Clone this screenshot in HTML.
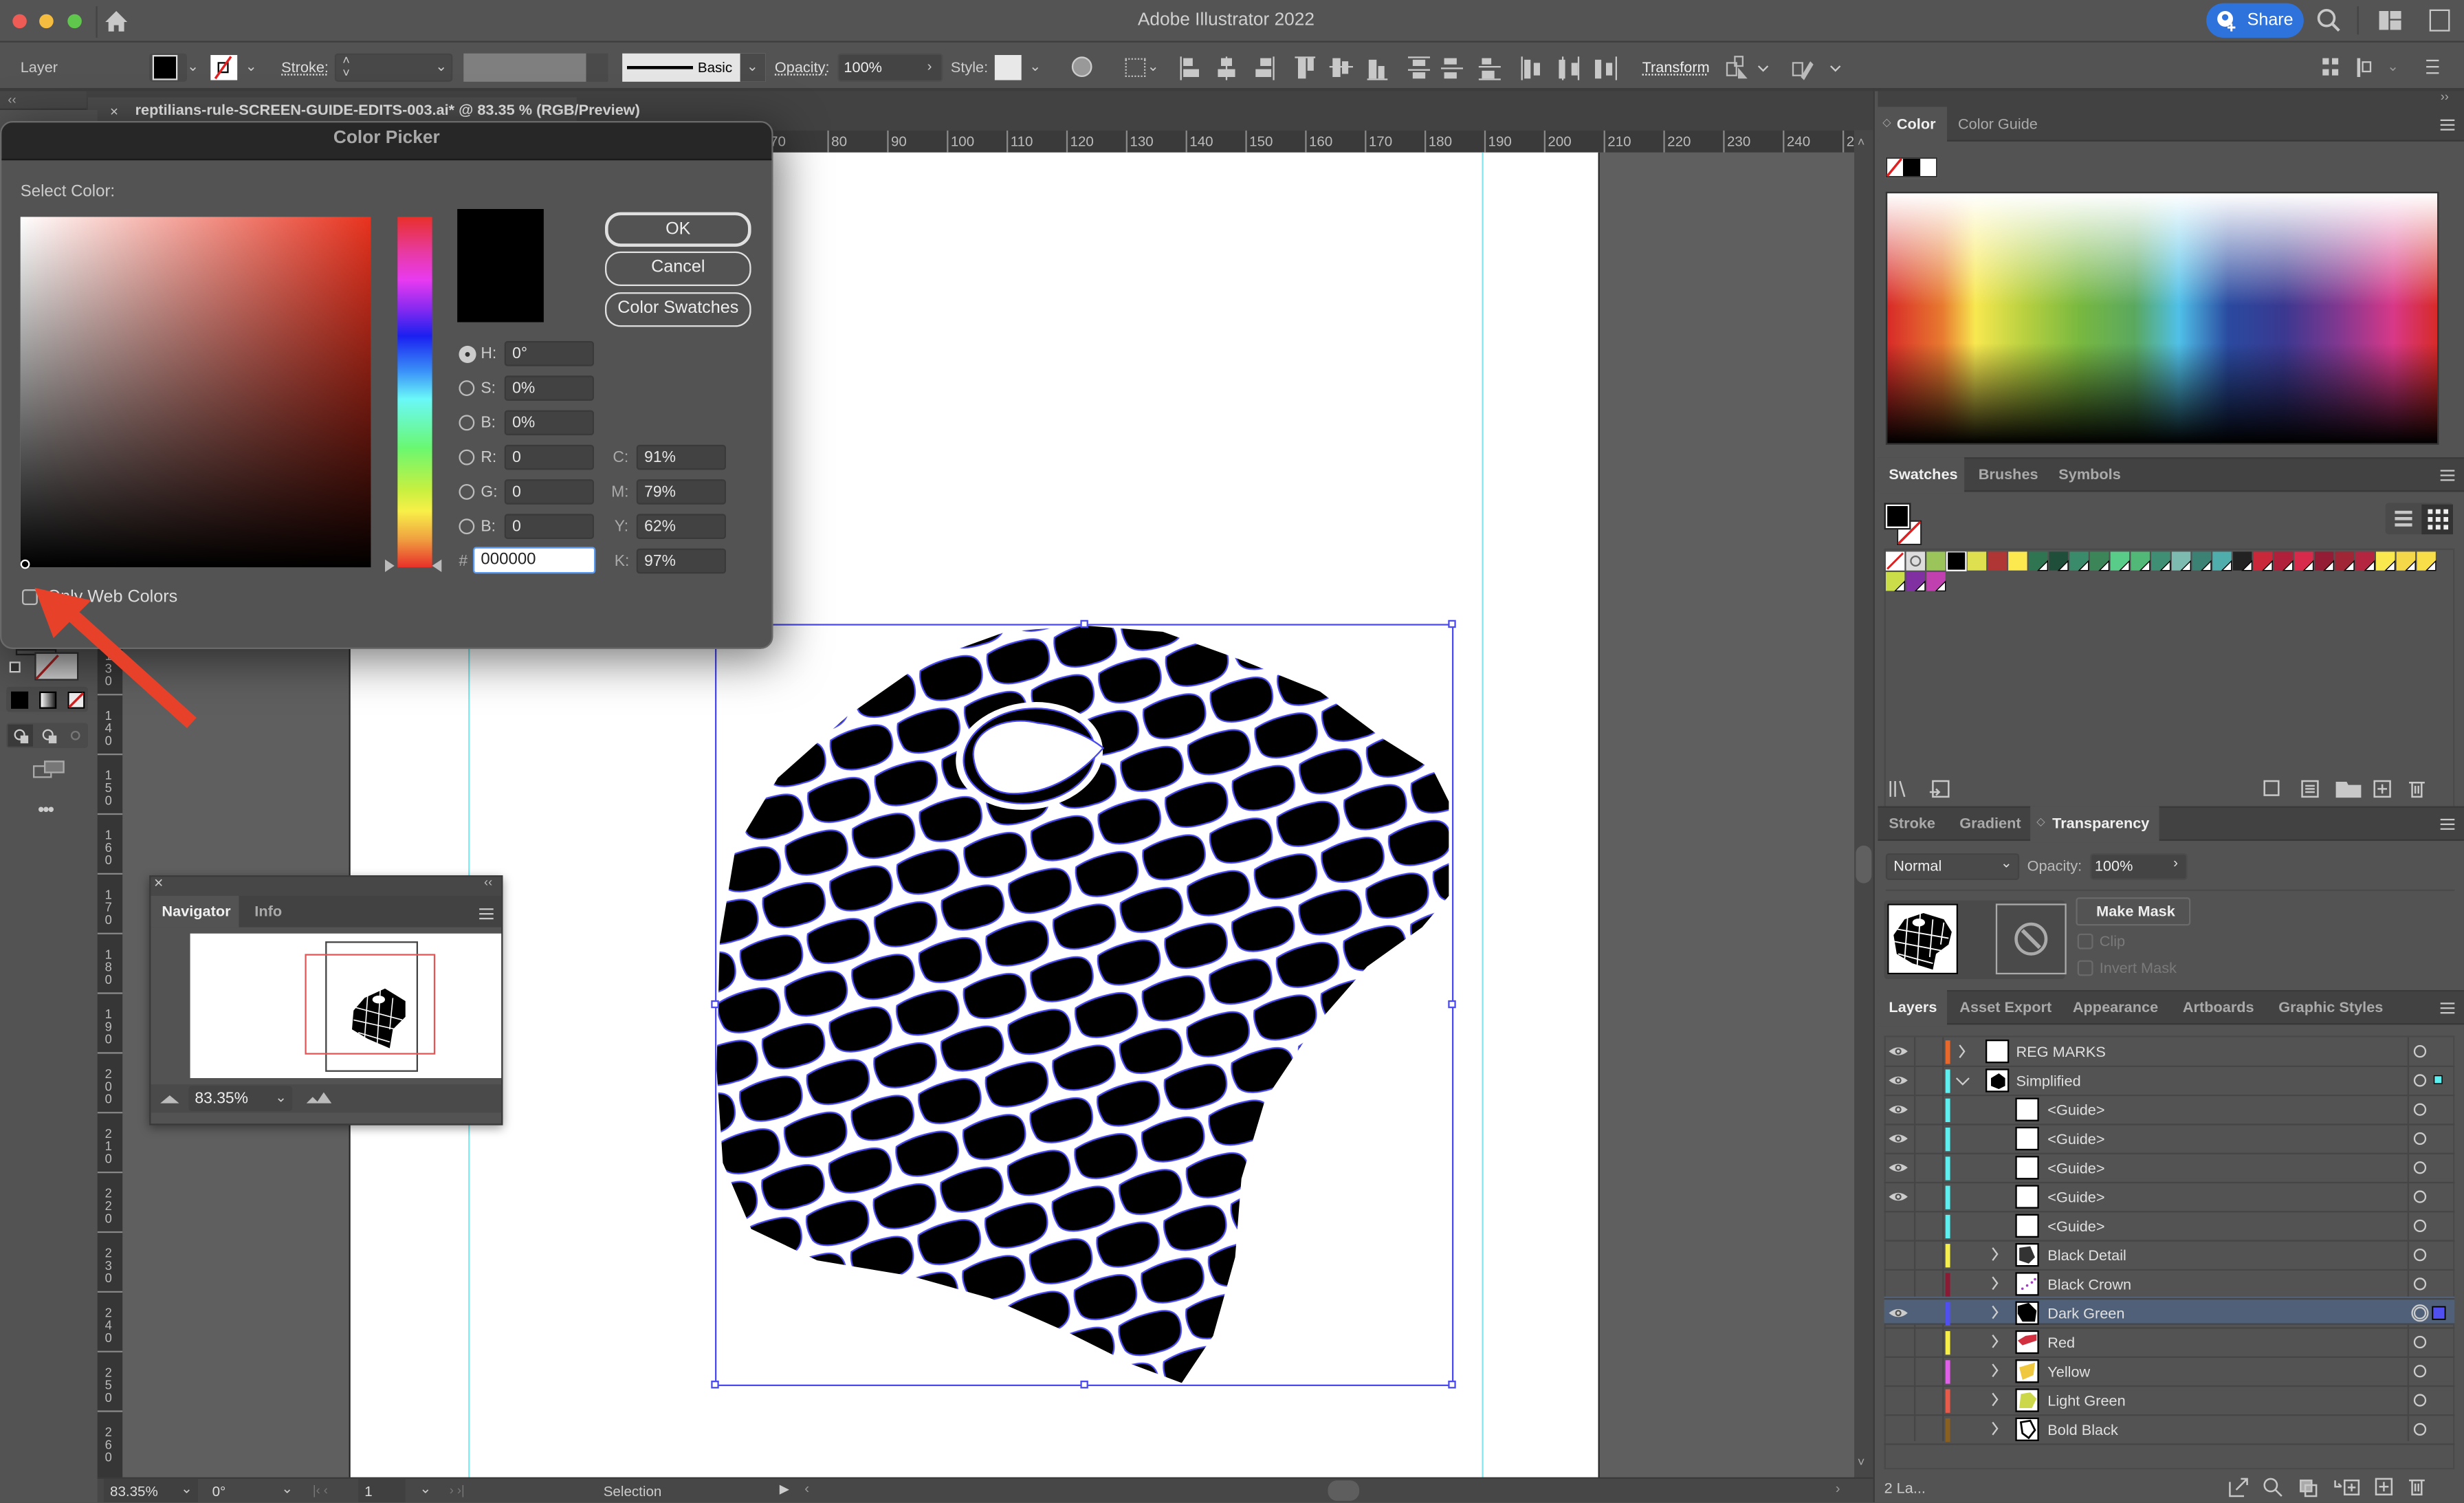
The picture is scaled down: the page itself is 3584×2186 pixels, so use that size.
<!DOCTYPE html>
<html><head><meta charset="utf-8">
<style>
*{box-sizing:border-box;margin:0;padding:0}
html,body{width:3584px;height:2186px;overflow:hidden;background:#535353}
#s{position:absolute;left:0;top:0;width:1568px;height:956px;transform:scale(2.285714);transform-origin:0 0;font-family:"Liberation Sans",sans-serif;color:#d8d8d8;font-size:10px;overflow:hidden;background:#535353}
.a{position:absolute}
.t{position:absolute;white-space:nowrap}
.fld{position:absolute;background:#424242;border:1px solid #3a3a3a;border-radius:2px;color:#e6e6e6;font-size:10px;padding:2px 4px;height:16px;line-height:11px}
.btn{position:absolute;border:1.5px solid #e0e0e0;border-radius:10px;color:#eee;font-size:11px;text-align:center;line-height:18px}
.rad{position:absolute;width:10px;height:10px;border:1px solid #bbb;border-radius:50%}
.lbl{position:absolute;color:#ccc;font-size:10px}
.ic{position:absolute;background:#c8c8c8}
.tab{position:absolute;font-size:9.5px;font-weight:bold;color:#aaa}
.tabon{color:#f0f0f0}
.row{position:absolute;left:1199px;width:363px;height:18px;border-bottom:1px solid #464646}
</style></head><body><div id="s">

<div class="a" style="left:0;top:0;width:1568px;height:27px;background:#545454;border-bottom:1px solid #3e3e3e"></div>
<div class="a" style="left:8px;top:9px;width:9px;height:9px;border-radius:50%;background:#ee5c55"></div>
<div class="a" style="left:25px;top:9px;width:9px;height:9px;border-radius:50%;background:#f5bd40"></div>
<div class="a" style="left:43px;top:9px;width:9px;height:9px;border-radius:50%;background:#5fc74c"></div>
<svg class="a" style="left:66px;top:6px" width="16" height="15"><path d="M8 1 L1 8 H3 V14 H6.5 V10 H9.5 V14 H13 V8 H15 Z" fill="#c8c8c8"/></svg>
<div class="a" style="left:61px;top:4px;width:1px;height:20px;background:#444"></div>
<div class="t" style="left:724px;top:7px;font-size:11.5px;color:#d0d0d0">Adobe Illustrator 2022</div>
<div class="a" style="left:1404px;top:2px;width:62px;height:22px;border-radius:11px;background:#2e72dc"></div>
<svg class="a" style="left:1410px;top:6px" width="14" height="14"><circle cx="6" cy="6" r="5" fill="#fff"/><circle cx="6" cy="5" r="2" fill="#2e72dc"/><path d="M10 9v5M7.5 11.5h5" stroke="#fff" stroke-width="1.3"/></svg>
<div class="t" style="left:1430px;top:7px;font-size:11px;color:#fff">Share</div>
<svg class="a" style="left:1474px;top:5px" width="16" height="16"><circle cx="6.5" cy="6.5" r="5" stroke="#c8c8c8" stroke-width="1.6" fill="none"/><path d="M10 10l4.5 4.5" stroke="#c8c8c8" stroke-width="1.8"/></svg>
<div class="a" style="left:1500px;top:4px;width:1px;height:18px;background:#444"></div>
<div class="ic" style="left:1514px;top:7px;width:6px;height:12px"></div><div class="ic" style="left:1521px;top:7px;width:7px;height:5px"></div><div class="ic" style="left:1521px;top:13px;width:7px;height:6px"></div>
<div class="a" style="left:1546px;top:6px;width:13px;height:14px;border:1.5px solid #c8c8c8"></div>

<div class="a" style="left:0;top:28px;width:1568px;height:30px;background:#535353;border-bottom:2px solid #3c3c3c"></div>
<div class="t" style="left:13px;top:38px;font-size:9.5px;color:#ccc">Layer</div>
<div class="a" style="left:95px;top:34px;width:24px;height:18px;background:#4a4a4a;border-radius:2px"></div>
<div class="a" style="left:97px;top:35px;width:16px;height:16px;background:#000;border:1px solid #ddd"></div>
<div class="t" style="left:119px;top:37px;font-size:9px;color:#ccc">⌄</div>
<div class="a" style="left:134px;top:35px;width:17px;height:16px;background:#fff"></div>
<svg class="a" style="left:134px;top:35px" width="17" height="16"><rect x="5" y="5" width="6" height="6" fill="none" stroke="#000"/><path d="M3 15 L13 1" stroke="#e02020" stroke-width="1.5"/></svg>
<div class="t" style="left:156px;top:37px;font-size:9px;color:#ccc">⌄</div>
<div class="t" style="left:179px;top:38px;font-size:9.5px;color:#ddd;text-decoration:underline dotted">Stroke:</div>
<div class="a" style="left:213px;top:34px;width:75px;height:18px;background:#484848;border:1px solid #444;border-radius:2px"></div>
<div class="t" style="left:218px;top:35px;font-size:8px;color:#ccc;line-height:8px">˄<br>˅</div>
<div class="t" style="left:277px;top:37px;font-size:9px;color:#ccc">⌄</div>
<div class="a" style="left:295px;top:34px;width:78px;height:18px;background:#7f7f7f"></div>
<div class="a" style="left:373px;top:34px;width:14px;height:18px;background:#4a4a4a"></div>
<div class="a" style="left:396px;top:34px;width:91px;height:18px;background:#e5e5e5"></div>
<div class="a" style="left:399px;top:42px;width:42px;height:2px;background:#000"></div>
<div class="t" style="left:444px;top:38px;font-size:9px;color:#000">Basic</div>
<div class="a" style="left:471px;top:34px;width:16px;height:18px;background:#4a4a4a"></div>
<div class="t" style="left:475px;top:37px;font-size:9px;color:#ccc">⌄</div>
<div class="t" style="left:493px;top:38px;font-size:9.5px;color:#ddd;text-decoration:underline dotted">Opacity:</div>
<div class="a" style="left:533px;top:34px;width:67px;height:18px;background:#444;border:1px solid #4c4c4c;border-radius:2px"></div>
<div class="t" style="left:537px;top:38px;font-size:9.5px;color:#eee">100%</div>
<div class="t" style="left:590px;top:37px;font-size:9px;color:#ccc">›</div>
<div class="t" style="left:605px;top:38px;font-size:9.5px;color:#ccc">Style:</div>
<div class="a" style="left:633px;top:35px;width:17px;height:16px;background:#e8e8e8"></div>
<div class="t" style="left:655px;top:37px;font-size:9px;color:#ccc">⌄</div>
<div class="a" style="left:682px;top:36px;width:13px;height:13px;border-radius:50%;background:#999;border:1px solid #ccc"></div>
<div class="a" style="left:716px;top:37px;width:13px;height:12px;border:1px dotted #bbb"></div>
<div class="t" style="left:730px;top:37px;font-size:9px;color:#ccc">⌄</div>
<div class="ic" style="left:751px;top:36px;width:1px;height:15px"></div><div class="ic" style="left:753px;top:37px;width:6px;height:5px"></div><div class="ic" style="left:753px;top:44px;width:10px;height:5px"></div>
<div class="ic" style="left:780px;top:36px;width:1px;height:15px"></div><div class="ic" style="left:777px;top:37px;width:7px;height:5px"></div><div class="ic" style="left:775px;top:44px;width:11px;height:5px"></div>
<div class="ic" style="left:810px;top:36px;width:1px;height:15px"></div><div class="ic" style="left:802px;top:37px;width:7px;height:5px"></div><div class="ic" style="left:799px;top:44px;width:10px;height:5px"></div>
<div class="ic" style="left:824px;top:36px;width:13px;height:1px"></div><div class="ic" style="left:826px;top:37px;width:5px;height:13px"></div><div class="ic" style="left:832px;top:37px;width:4px;height:8px"></div>
<div class="ic" style="left:846px;top:42px;width:15px;height:1px"></div><div class="ic" style="left:848px;top:37px;width:5px;height:12px"></div><div class="ic" style="left:854px;top:39px;width:4px;height:8px"></div>
<div class="ic" style="left:870px;top:50px;width:13px;height:1px"></div><div class="ic" style="left:871px;top:38px;width:5px;height:12px"></div><div class="ic" style="left:877px;top:42px;width:4px;height:8px"></div>
<div class="ic" style="left:896px;top:36px;width:14px;height:1px"></div><div class="ic" style="left:899px;top:38px;width:8px;height:4px"></div><div class="ic" style="left:896px;top:44px;width:14px;height:1px"></div><div class="ic" style="left:899px;top:46px;width:8px;height:4px"></div>
<div class="ic" style="left:919px;top:37px;width:8px;height:4px"></div><div class="ic" style="left:917px;top:43px;width:14px;height:1px"></div><div class="ic" style="left:919px;top:46px;width:8px;height:4px"></div>
<div class="ic" style="left:943px;top:37px;width:6px;height:4px"></div><div class="ic" style="left:941px;top:42px;width:14px;height:1px"></div><div class="ic" style="left:943px;top:45px;width:8px;height:5px"></div><div class="ic" style="left:941px;top:50px;width:14px;height:1px"></div>
<div class="ic" style="left:968px;top:36px;width:1px;height:15px"></div><div class="ic" style="left:970px;top:38px;width:4px;height:12px"></div><div class="ic" style="left:976px;top:40px;width:4px;height:8px"></div>
<div class="ic" style="left:994px;top:36px;width:1px;height:15px"></div><div class="ic" style="left:992px;top:38px;width:4px;height:12px"></div><div class="ic" style="left:1000px;top:40px;width:4px;height:8px"></div><div class="ic" style="left:1004px;top:36px;width:1px;height:15px"></div>
<div class="ic" style="left:1015px;top:38px;width:4px;height:12px"></div><div class="ic" style="left:1022px;top:40px;width:4px;height:8px"></div><div class="ic" style="left:1028px;top:36px;width:1px;height:15px"></div>
<div class="t" style="left:1045px;top:38px;font-size:9.5px;color:#eee;text-decoration:underline dotted">Transform</div>
<svg class="a" style="left:1098px;top:35px" width="32" height="18"><rect x="1" y="5" width="6" height="8" fill="none" stroke="#bbb"/><rect x="6" y="1" width="5" height="6" fill="none" stroke="#bbb"/><path d="M8 8 L14 15 L8 15 Z" fill="#bbb"/><path d="M21 7 l3 3 l3 -3" stroke="#ccc" fill="none"/></svg>
<svg class="a" style="left:1140px;top:35px" width="32" height="18"><rect x="1" y="5" width="6" height="8" fill="none" stroke="#bbb"/><path d="M6 14 L12 4 L14 6 L8 16 Z" fill="#bbb"/><path d="M25 7 l3 3 l3 -3" stroke="#ccc" fill="none"/></svg>
<div class="ic" style="left:1478px;top:37px;width:4px;height:4px"></div><div class="ic" style="left:1484px;top:37px;width:4px;height:4px"></div><div class="ic" style="left:1478px;top:44px;width:4px;height:4px"></div><div class="ic" style="left:1484px;top:44px;width:4px;height:4px"></div>
<div class="ic" style="left:1500px;top:37px;width:2px;height:12px"></div><div class="a" style="left:1503px;top:39px;width:6px;height:7px;border:1.5px solid #c8c8c8"></div>
<div class="t" style="left:1519px;top:37px;font-size:9px;color:#999">⌄</div>
<div class="ic" style="left:1544px;top:38px;width:8px;height:1px"></div><div class="ic" style="left:1544px;top:42px;width:8px;height:1px"></div><div class="ic" style="left:1544px;top:46px;width:8px;height:1px"></div>

<div class="a" style="left:0;top:58px;width:1195px;height:25px;background:#424242"></div>
<div class="a" style="left:0;top:58px;width:55px;height:12px;background:#474747;border-bottom:1px solid #3a3a3a"></div>
<div class="t" style="left:5px;top:59px;font-size:8px;color:#aaa">‹‹</div>
<div class="a" style="left:56px;top:62px;width:311px;height:21px;background:#4b4b4b"></div>
<div class="t" style="left:70px;top:66px;font-size:9px;color:#ddd">×</div>
<div class="t" style="left:86px;top:65px;font-size:9.5px;font-weight:bold;color:#e8e8e8">reptilians-rule-SCREEN-GUIDE-EDITS-003.ai* @ 83.35 % (RGB/Preview)</div>

<div class="a" style="left:0;top:70px;width:62px;height:886px;background:#535353"></div>
<div class="a" style="left:62px;top:83px;width:16px;height:857px;background:#363636"></div>
<div class="a" style="left:78px;top:83px;width:1102px;height:14px;background:#3a3a3a"></div>
<div class="a" style="left:78px;top:97px;width:1102px;height:843px;background:#5f5f5f"></div>
<div class="a" style="left:222px;top:97px;width:796px;height:843px;background:#fff;border-left:1px solid #222;border-right:1px solid #222"></div>
<div class="a" style="left:298px;top:97px;width:1px;height:843px;background:#7fe8ee"></div>
<div class="a" style="left:943px;top:97px;width:1px;height:843px;background:#7fe8ee"></div>
<div class="a" style="left:1180px;top:83px;width:12px;height:857px;background:#474747"></div>
<div class="a" style="left:1181px;top:538px;width:10px;height:24px;border-radius:5px;background:#606060"></div>
<div class="t" style="left:1182px;top:86px;font-size:8px;color:#aaa">˄</div>
<div class="t" style="left:1182px;top:926px;font-size:8px;color:#aaa">˅</div>
<div class="t" style="left:490px;top:85px;font-size:9px;color:#bbb">70</div>
<svg class="a" style="left:490px;top:83px" width="690" height="14"><g stroke="#888" stroke-width="1">
<path d="M37 0V14M75 0V14M113 0V14M151 0V14M189 0V14M227 0V14M265 0V14M303 0V14M341 0V14M379 0V14M417 0V14M455 0V14M493 0V14M531 0V14M569 0V14M607 0V14M645 0V14M683 0V14"/></g>
<g fill="#bbb" font-family="Liberation Sans" font-size="9">
<text x="39" y="10">80</text><text x="77" y="10">90</text><text x="115" y="10">100</text><text x="153" y="10">110</text><text x="191" y="10">120</text><text x="229" y="10">130</text><text x="267" y="10">140</text><text x="305" y="10">150</text><text x="343" y="10">160</text><text x="381" y="10">170</text><text x="419" y="10">180</text><text x="457" y="10">190</text><text x="495" y="10">200</text><text x="533" y="10">210</text><text x="571" y="10">220</text><text x="609" y="10">230</text><text x="647" y="10">240</text><text x="685" y="10">2</text></g></svg>
<svg class="a" style="left:62px;top:400px" width="16" height="540"><g fill="#bbb" font-family="Liberation Sans" font-size="8" text-anchor="middle">
<text x="7" y="20">1</text><text x="7" y="28">3</text><text x="7" y="36">0</text>
<text x="7" y="58">1</text><text x="7" y="66">4</text><text x="7" y="74">0</text>
<text x="7" y="96">1</text><text x="7" y="104">5</text><text x="7" y="112">0</text>
<text x="7" y="134">1</text><text x="7" y="142">6</text><text x="7" y="150">0</text>
<text x="7" y="172">1</text><text x="7" y="180">7</text><text x="7" y="188">0</text>
<text x="7" y="210">1</text><text x="7" y="218">8</text><text x="7" y="226">0</text>
<text x="7" y="248">1</text><text x="7" y="256">9</text><text x="7" y="264">0</text>
<text x="7" y="286">2</text><text x="7" y="294">0</text><text x="7" y="302">0</text>
<text x="7" y="324">2</text><text x="7" y="332">1</text><text x="7" y="340">0</text>
<text x="7" y="362">2</text><text x="7" y="370">2</text><text x="7" y="378">0</text>
<text x="7" y="400">2</text><text x="7" y="408">3</text><text x="7" y="416">0</text>
<text x="7" y="438">2</text><text x="7" y="446">4</text><text x="7" y="454">0</text>
<text x="7" y="476">2</text><text x="7" y="484">5</text><text x="7" y="492">0</text>
<text x="7" y="514">2</text><text x="7" y="522">6</text><text x="7" y="530">0</text></g>
<path d="M0 42H16M0 80H16M0 118H16M0 156H16M0 194H16M0 232H16M0 270H16M0 308H16M0 346H16M0 384H16M0 422H16M0 460H16M0 498H16" stroke="#888"/></svg>

<!-- lizard -->
<svg class="a" style="left:0;top:0" width="1568" height="956">
<defs>
<pattern id="cells" width="44" height="58" patternUnits="userSpaceOnUse" patternTransform="rotate(-14)">
<rect width="44" height="58" fill="#fff"/>
<path d="M3 5 Q14 1 30 2 Q42 3 41 14 Q40 27 24 27 Q7 28 3 21 Q0 12 3 5Z" fill="#000" stroke="#4a4aee" stroke-width="1"/>
<path d="M-19 34 Q-8 30 8 31 Q20 32 19 43 Q18 56 2 56 Q-15 57 -19 50 Q-22 41 -19 34Z" fill="#000" stroke="#4a4aee" stroke-width="1"/>
<path d="M25 34 Q36 30 52 31 Q64 32 63 43 Q62 56 46 56 Q29 57 25 50 Q22 41 25 34Z" fill="#000" stroke="#4a4aee" stroke-width="1"/>
</pattern>
<clipPath id="head"><path d="M690 398 L740 402 L790 420 L840 440 L880 470 L912 490 L922 510 L922 570 L905 590 L870 615 L835 655 L805 700 L790 750 L786 800 L772 850 L752 880 L720 868 L680 848 L630 826 L580 812 L520 802 L478 782 L460 740 L456 680 L458 600 L468 540 L495 495 L540 455 L590 420 L640 402 Z"/></clipPath>
</defs>
<g clip-path="url(#head)">
<rect x="440" y="390" width="500" height="500" fill="url(#cells)"/>
</g>
<ellipse cx="655" cy="481" rx="47" ry="34" fill="#fff" transform="rotate(-8 655 481)"/>
<ellipse cx="655" cy="481" rx="42" ry="30" fill="#000" stroke="#4a4aee" transform="rotate(-8 655 481)"/>
<path d="M620 485 C615 465 640 455 660 460 C680 462 695 470 702 476 C690 490 670 505 645 505 C630 505 622 495 620 485 Z" fill="#fff" stroke="#4a4aee"/>
<rect x="455.5" y="397.5" width="469" height="484" fill="none" stroke="#4b4bf0" stroke-width="1"/>
<g fill="#fff" stroke="#4b4bf0"><rect x="453" y="395" width="4" height="4"/><rect x="688" y="395" width="4" height="4"/><rect x="922" y="395" width="4" height="4"/><rect x="453" y="637" width="4" height="4"/><rect x="922" y="637" width="4" height="4"/><rect x="453" y="879" width="4" height="4"/><rect x="688" y="879" width="4" height="4"/><rect x="922" y="879" width="4" height="4"/></g>
</svg>

<div class="a" style="left:10px;top:413px;width:26px;height:4px;border:1px solid #222;background:#555"></div>
<div class="a" style="left:22px;top:415px;width:28px;height:18px;background:linear-gradient(#aaa,#ccc);border:1px solid #333"></div>
<svg class="a" style="left:22px;top:415px" width="28" height="18"><path d="M1 17 L15 2" stroke="#a02020" stroke-width="1.5"/></svg>
<div class="a" style="left:6px;top:421px;width:7px;height:7px;border:1px solid #ddd;background:#333"></div>
<div class="a" style="left:4px;top:437px;width:52px;height:16px;background:#4b4b4b;border-radius:2px"></div>
<div class="a" style="left:7px;top:440px;width:11px;height:11px;background:#000"></div>
<div class="a" style="left:25px;top:440px;width:11px;height:11px;background:linear-gradient(to right,#fff,#222);border:1px solid #000"></div>
<div class="a" style="left:43px;top:440px;width:11px;height:11px;background:#eee;border:1px solid #000"></div>
<svg class="a" style="left:43px;top:440px" width="11" height="11"><path d="M1 10 L10 1" stroke="#d02020" stroke-width="1.5"/></svg>
<div class="a" style="left:4px;top:460px;width:52px;height:16px;background:#4b4b4b;border-radius:2px"></div>
<div class="a" style="left:5px;top:461px;width:16px;height:14px;background:#3a3a3a"></div>
<div class="a" style="left:9px;top:464px;width:7px;height:7px;border:1.3px solid #ccc;border-radius:50%"></div><div class="ic" style="left:13px;top:468px;width:5px;height:5px"></div>
<div class="a" style="left:27px;top:464px;width:7px;height:7px;border:1.3px solid #ccc;border-radius:50%"></div><div class="ic" style="left:31px;top:468px;width:5px;height:5px"></div>
<div class="a" style="left:45px;top:465px;width:6px;height:6px;border:1px solid #777;border-radius:50%"></div>
<div class="a" style="left:21px;top:487px;width:12px;height:8px;border:1.3px solid #aaa"></div><div class="a" style="left:28px;top:484px;width:13px;height:8px;border:1.3px solid #aaa;background:#777"></div>
<div class="t" style="left:24px;top:508px;font-size:12px;color:#ccc;letter-spacing:-1px">•••</div>

<div class="a" style="left:95px;top:557px;width:225px;height:159px;background:#535353;border:1px solid #3a3a3a;box-shadow:0 2px 6px rgba(0,0,0,.4)"></div>
<div class="a" style="left:96px;top:558px;width:223px;height:12px;background:#474747"></div>
<div class="t" style="left:98px;top:557px;font-size:10px;color:#ccc">×</div>
<div class="t" style="left:308px;top:557px;font-size:8px;color:#bbb">‹‹</div>
<div class="a" style="left:96px;top:570px;width:223px;height:20px;background:#424242"></div>
<div class="a" style="left:96px;top:570px;width:56px;height:20px;background:#535353"></div>
<div class="tab tabon" style="left:103px;top:575px">Navigator</div>
<div class="tab" style="left:162px;top:575px">Info</div>
<div class="ic" style="left:305px;top:578px;width:9px;height:1px"></div><div class="ic" style="left:305px;top:581px;width:9px;height:1px"></div><div class="ic" style="left:305px;top:584px;width:9px;height:1px"></div>
<div class="a" style="left:121px;top:594px;width:198px;height:92px;background:#fff"></div>
<div class="a" style="left:207px;top:599px;width:59px;height:83px;border:1px solid #444"></div>
<div class="a" style="left:194px;top:607px;width:83px;height:64px;border:1.5px solid #e55555"></div>
<svg class="a" style="left:220px;top:625px" width="42" height="45"><path d="M12 10 L25 4 L38 12 L38 22 L30 30 L28 42 L14 36 L4 30 L5 18 Z" fill="#000"/><g stroke="#fff" stroke-width="0.7"><path d="M6 16 L36 24M5 24 L32 30M8 32 L28 38M14 8 L12 36M22 5 L20 40M30 10 L28 30"/></g><ellipse cx="21" cy="11" rx="4" ry="2.5" fill="#fff"/></svg>
<div class="a" style="left:96px;top:690px;width:223px;height:18px;background:#4a4a4a"></div>
<svg class="a" style="left:102px;top:695px" width="12" height="8"><path d="M0 7 L6 2 L12 7Z" fill="#bbb"/></svg>
<div class="a" style="left:120px;top:691px;width:66px;height:16px;background:#444;border-radius:2px"></div>
<div class="t" style="left:124px;top:694px;font-size:10px;color:#eee">83.35%</div>
<div class="t" style="left:175px;top:693px;font-size:9px;color:#ccc">⌄</div>
<svg class="a" style="left:195px;top:693px" width="16" height="10"><path d="M0 9 L4 5 L7 8 L11 2 L16 9Z" fill="#bbb"/></svg>

<div class="a" style="left:0;top:77px;width:492px;height:336px;border-radius:8px;box-shadow:4px 6px 30px rgba(0,0,0,.55)"></div>
<div class="a" style="left:0;top:77px;width:492px;height:336px;border-radius:8px;background:#535353;border:1px solid #6a6a6a;overflow:hidden">
<div class="a" style="left:0;top:0;width:492px;height:24px;background:#272727;border-bottom:1px solid #1a1a1a"></div>
</div>
<div class="t" style="left:0;top:82px;width:492px;text-align:center;font-size:11.5px;font-weight:bold;color:#a8a8a8">Color Picker</div>
<div class="t" style="left:13px;top:116px;font-size:10.5px;color:#ccc">Select Color:</div>
<div class="a" style="left:13px;top:138px;width:223px;height:223px;background:linear-gradient(to bottom,rgba(0,0,0,0),#000),linear-gradient(to right,#fff,#e8321e)"></div>
<div class="a" style="left:253px;top:138px;width:22px;height:223px;background:linear-gradient(to bottom,#e8302a 0%,#e83aa0 10%,#e83af0 18%,#8a2af0 26%,#1a20f0 34%,#3a90f8 44%,#6af8f8 52%,#6af870 66%,#c8f040 78%,#f8f048 84%,#f0a040 92%,#e8302a 100%)"></div>
<svg class="a" style="left:245px;top:355px" width="38" height="10"><path d="M0 1 L6 5 L0 9Z" fill="#bbb"/><path d="M36 1 L30 5 L36 9Z" fill="#bbb"/></svg>
<div class="a" style="left:13px;top:356px;width:6px;height:6px;border:1px solid #fff;border-radius:50%"></div>
<div class="a" style="left:291px;top:133px;width:55px;height:72px;background:#000"></div>
<div class="btn" style="left:385px;top:135px;width:93px;height:22px;border-width:2px">OK</div>
<div class="btn" style="left:385px;top:160px;width:93px;height:22px">Cancel</div>
<div class="btn" style="left:385px;top:186px;width:93px;height:22px">Color Swatches</div>
<div class="a" style="left:292px;top:220px;width:11px;height:11px;border-radius:50%;background:#ccc"></div><div class="a" style="left:296px;top:224px;width:3px;height:3px;border-radius:50%;background:#333"></div>
<div class="rad" style="left:292px;top:242px"></div><div class="rad" style="left:292px;top:264px"></div><div class="rad" style="left:292px;top:286px"></div><div class="rad" style="left:292px;top:308px"></div><div class="rad" style="left:292px;top:330px"></div>
<div class="lbl" style="left:306px;top:220px">H:</div><div class="lbl" style="left:306px;top:242px">S:</div><div class="lbl" style="left:306px;top:264px">B:</div><div class="lbl" style="left:306px;top:286px">R:</div><div class="lbl" style="left:306px;top:308px">G:</div><div class="lbl" style="left:306px;top:330px">B:</div>
<div class="fld" style="left:321px;top:217px;width:57px">0°</div>
<div class="fld" style="left:321px;top:239px;width:57px">0%</div>
<div class="fld" style="left:321px;top:261px;width:57px">0%</div>
<div class="fld" style="left:321px;top:283px;width:57px">0</div>
<div class="fld" style="left:321px;top:305px;width:57px">0</div>
<div class="fld" style="left:321px;top:327px;width:57px">0</div>
<div class="lbl" style="left:292px;top:352px;color:#aaa">#</div>
<div class="fld" style="left:301px;top:348px;width:78px;height:17px;background:#fff;border:1px solid #5a9af0;color:#222;font-size:10.5px">000000</div>
<div class="lbl" style="left:390px;top:286px;color:#aaa">C:</div><div class="lbl" style="left:389px;top:308px;color:#aaa">M:</div><div class="lbl" style="left:391px;top:330px;color:#aaa">Y:</div><div class="lbl" style="left:391px;top:352px;color:#aaa">K:</div>
<div class="fld" style="left:405px;top:283px;width:57px">91%</div>
<div class="fld" style="left:405px;top:305px;width:57px">79%</div>
<div class="fld" style="left:405px;top:327px;width:57px">62%</div>
<div class="fld" style="left:405px;top:349px;width:57px">97%</div>
<div class="a" style="left:14px;top:375px;width:10px;height:10px;border:1px solid #bbb;border-radius:2px"></div>
<div class="t" style="left:30px;top:374px;font-size:11px;color:#ddd">Only Web Colors</div>
<svg class="a" style="left:0;top:350px" width="140" height="120"><path d="M122 110 L40 36" stroke="#e8412a" stroke-width="9"/><path d="M22 24 L58 32 L34 56 Z" fill="#e8412a"/></svg>

<div class="a" style="left:1192px;top:58px;width:376px;height:898px;background:#535353;border-left:1px solid #3a3a3a"></div>
<div class="a" style="left:1195px;top:58px;width:373px;height:10px;background:#424242"></div>
<div class="t" style="left:1553px;top:57px;font-size:8px;color:#aaa">››</div>
<div class="a" style="left:1195px;top:68px;width:373px;height:22px;background:#424242;border-bottom:1px solid #383838"></div>
<div class="a" style="left:1195px;top:68px;width:44px;height:23px;background:#535353"></div>
<div class="t" style="left:1198px;top:74px;font-size:7px;color:#aaa">◇</div>
<div class="tab tabon" style="left:1207px;top:74px">Color</div>
<div class="tab" style="left:1246px;top:74px;font-weight:normal;color:#aaa">Color Guide</div>
<div class="ic" style="left:1553px;top:76px;width:9px;height:1px"></div><div class="ic" style="left:1553px;top:79px;width:9px;height:1px"></div><div class="ic" style="left:1553px;top:82px;width:9px;height:1px"></div>
<div class="a" style="left:1200px;top:100px;width:33px;height:13px;background:#fff;border:1px solid #333"></div>
<div class="a" style="left:1211px;top:101px;width:11px;height:11px;background:#000"></div>
<svg class="a" style="left:1200px;top:100px" width="11" height="13"><path d="M1 12 L10 1" stroke="#e02020" stroke-width="1.5"/></svg>
<div class="a" style="left:1200px;top:122px;width:352px;height:161px;border:1px solid #333;background:linear-gradient(to bottom,rgba(255,255,255,1) 0%,rgba(255,255,255,0) 45%,rgba(0,0,0,0) 60%,rgba(0,0,0,1) 100%),linear-gradient(to right,#d82a28 0%,#e87a30 10%,#f8e850 16%,#b8d040 25%,#78b840 35%,#5aa860 45%,#50c0e8 53%,#2a4aa0 62%,#3a3890 72%,#803890 82%,#d83888 92%,#d82a28 100%)"></div>

<div class="a" style="left:1195px;top:291px;width:373px;height:22px;background:#424242;border-top:1px solid #3a3a3a;border-bottom:1px solid #383838"></div>
<div class="a" style="left:1195px;top:291px;width:55px;height:23px;background:#535353"></div>
<div class="tab tabon" style="left:1202px;top:297px">Swatches</div>
<div class="tab" style="left:1259px;top:297px">Brushes</div>
<div class="tab" style="left:1310px;top:297px">Symbols</div>
<div class="ic" style="left:1553px;top:299px;width:9px;height:1px"></div><div class="ic" style="left:1553px;top:302px;width:9px;height:1px"></div><div class="ic" style="left:1553px;top:305px;width:9px;height:1px"></div>
<div class="a" style="left:1207px;top:331px;width:16px;height:16px;background:#fff;border:1px solid #222"></div>
<svg class="a" style="left:1207px;top:331px" width="16" height="16"><path d="M1 15 L15 1" stroke="#e02020" stroke-width="1.5"/></svg>
<div class="a" style="left:1200px;top:321px;width:15px;height:15px;background:#000;border:1px solid #fff;outline:1px solid #222"></div>
<div class="a" style="left:1518px;top:320px;width:43px;height:20px;border:1px solid #4a4a4a;border-radius:2px;background:#4a4a4a"></div>
<div class="a" style="left:1541px;top:321px;width:20px;height:19px;background:#333"></div>
<div class="ic" style="left:1524px;top:325px;width:11px;height:2px"></div><div class="ic" style="left:1524px;top:329px;width:11px;height:2px"></div><div class="ic" style="left:1524px;top:333px;width:11px;height:2px"></div>
<svg class="a" style="left:1545px;top:324px" width="13" height="13"><g fill="#eee"><rect x="0" y="0" width="3" height="3"/><rect x="5" y="0" width="3" height="3"/><rect x="10" y="0" width="3" height="3"/><rect x="0" y="5" width="3" height="3"/><rect x="5" y="5" width="3" height="3"/><rect x="10" y="5" width="3" height="3"/><rect x="0" y="10" width="3" height="3"/><rect x="5" y="10" width="3" height="3"/><rect x="10" y="10" width="3" height="3"/></g></svg>
<div class="a" style="left:1199px;top:349px;width:363px;height:179px;border:1px solid #4a4a4a"></div>
<svg class="a" style="left:1200px;top:351px" width="360" height="26">
<rect x="0" y="0" width="12" height="12" fill="#fff"/><path d="M1 11 L11 1" stroke="#e02020" stroke-width="1.3"/>
<rect x="13" y="0" width="12" height="12" fill="#ddd"/><circle cx="19" cy="6" r="3" fill="none" stroke="#666"/>
<rect x="26" y="0" width="12" height="12" fill="#9bc45a"/>
<rect x="39" y="0" width="12" height="12" fill="#000" stroke="#fff"/>
<rect x="52" y="0" width="12" height="12" fill="#dfe050"/>
<rect x="65" y="0" width="12" height="12" fill="#b03535"/>
<rect x="78" y="0" width="12" height="12" fill="#fbe94f"/>
<rect x="91" y="0" width="12" height="12" fill="#2f7552"/><rect x="104" y="0" width="12" height="12" fill="#1f4e3b"/><rect x="117" y="0" width="12" height="12" fill="#3a8a6c"/><rect x="130" y="0" width="12" height="12" fill="#3b8558"/><rect x="143" y="0" width="12" height="12" fill="#5acc8a"/><rect x="156" y="0" width="12" height="12" fill="#52b878"/><rect x="169" y="0" width="12" height="12" fill="#3f8f74"/><rect x="182" y="0" width="12" height="12" fill="#7dbbb0"/><rect x="195" y="0" width="12" height="12" fill="#3b8275"/><rect x="208" y="0" width="12" height="12" fill="#4fadab"/><rect x="221" y="0" width="12" height="12" fill="#222"/><rect x="234" y="0" width="12" height="12" fill="#c8283a"/><rect x="247" y="0" width="12" height="12" fill="#b0203a"/><rect x="260" y="0" width="12" height="12" fill="#d82a4a"/><rect x="273" y="0" width="12" height="12" fill="#951c35"/><rect x="286" y="0" width="12" height="12" fill="#a02535"/><rect x="299" y="0" width="12" height="12" fill="#b42540"/><rect x="312" y="0" width="12" height="12" fill="#fae84f"/><rect x="325" y="0" width="12" height="12" fill="#f5d84a"/><rect x="338" y="0" width="12" height="12" fill="#f8de48"/>
<rect x="0" y="13" width="12" height="12" fill="#ccdd4a"/><rect x="13" y="13" width="12" height="12" fill="#8030a0"/><rect x="26" y="13" width="12" height="12" fill="#c040b0"/>
<g fill="#fff" stroke="#000" stroke-width="0.6">
<path d="M97 12 L103 6 L103 12Z"/><path d="M110 12 L116 6 L116 12Z"/><path d="M123 12 L129 6 L129 12Z"/><path d="M136 12 L142 6 L142 12Z"/><path d="M149 12 L155 6 L155 12Z"/><path d="M162 12 L168 6 L168 12Z"/><path d="M175 12 L181 6 L181 12Z"/><path d="M188 12 L194 6 L194 12Z"/><path d="M201 12 L207 6 L207 12Z"/><path d="M214 12 L220 6 L220 12Z"/><path d="M227 12 L233 6 L233 12Z"/><path d="M240 12 L246 6 L246 12Z"/><path d="M253 12 L259 6 L259 12Z"/><path d="M266 12 L272 6 L272 12Z"/><path d="M279 12 L285 6 L285 12Z"/><path d="M292 12 L298 6 L298 12Z"/><path d="M305 12 L311 6 L311 12Z"/><path d="M318 12 L324 6 L324 12Z"/><path d="M331 12 L337 6 L337 12Z"/><path d="M344 12 L350 6 L350 12Z"/>
<path d="M6 25 L12 19 L12 25Z"/><path d="M19 25 L25 19 L25 25Z"/><path d="M32 25 L38 19 L38 25Z"/></g>
</svg>
<svg class="a" style="left:1200px;top:494px" width="360" height="16"><g stroke="#c8c8c8" fill="none" stroke-width="1.1">
<path d="M3 3V13M6 3V13M9 3 L12 13"/><rect x="30" y="3" width="10" height="10"/><path d="M28 10h6m-2-2l2 2-2 2"/>
<rect x="241" y="3" width="9" height="9"/><rect x="265" y="3" width="10" height="10"/><path d="M267 6h6M267 8h6M267 10h6"/>
<path d="M287 4h6l1 2h8v7h-15z" fill="#c8c8c8"/><rect x="311" y="3" width="10" height="10"/><path d="M316 5v6M313 8h6"/><path d="M333 4h10M335 4v9h6v-9M337 6v5M339 6v5"/></g></svg>

<div class="a" style="left:1195px;top:513px;width:373px;height:22px;background:#424242;border-top:1px solid #3a3a3a;border-bottom:1px solid #383838"></div>
<div class="a" style="left:1292px;top:513px;width:82px;height:23px;background:#535353"></div>
<div class="tab" style="left:1202px;top:519px">Stroke</div>
<div class="tab" style="left:1247px;top:519px">Gradient</div>
<div class="t" style="left:1296px;top:519px;font-size:7px;color:#aaa">◇</div>
<div class="tab tabon" style="left:1306px;top:519px">Transparency</div>
<div class="ic" style="left:1553px;top:521px;width:9px;height:1px"></div><div class="ic" style="left:1553px;top:524px;width:9px;height:1px"></div><div class="ic" style="left:1553px;top:527px;width:9px;height:1px"></div>
<div class="a" style="left:1200px;top:543px;width:85px;height:17px;background:#4a4a4a;border:1px solid #444;border-radius:2px"></div>
<div class="t" style="left:1205px;top:546px;font-size:9.5px;color:#eee">Normal</div>
<div class="t" style="left:1273px;top:544px;font-size:9px;color:#ddd">⌄</div>
<div class="t" style="left:1290px;top:546px;font-size:9.5px;color:#bbb">Opacity:</div>
<div class="a" style="left:1330px;top:543px;width:62px;height:17px;background:#444;border:1px solid #4c4c4c;border-radius:2px"></div>
<div class="t" style="left:1333px;top:546px;font-size:9.5px;color:#eee">100%</div>
<div class="t" style="left:1383px;top:544px;font-size:9px;color:#ddd">›</div>
<div class="a" style="left:1200px;top:566px;width:362px;height:1px;background:#4a4a4a"></div>
<div class="a" style="left:1199px;top:573px;width:115px;height:50px;background:#4a4a4a;border-radius:2px"></div>
<div class="a" style="left:1201px;top:575px;width:45px;height:45px;background:#fff;border:1px solid #000"></div>
<svg class="a" style="left:1202px;top:577px" width="43" height="42"><path d="M10 8 L22 4 L35 8 L40 16 L38 24 L30 30 L28 40 L15 36 L5 30 L3 18 Z" fill="#000"/><g stroke="#fff" stroke-width="0.8"><path d="M4 14 L38 20M3 22 L34 28M6 30 L28 36M12 6 L10 34M20 4 L18 38M28 8 L26 32M35 10 L33 24"/></g><ellipse cx="19" cy="10" rx="4" ry="2.5" fill="#fff"/></svg>
<div class="a" style="left:1270px;top:575px;width:45px;height:45px;border:1px solid #aaa"></div>
<div class="a" style="left:1282px;top:587px;width:21px;height:21px;border:2.5px solid #aaa;border-radius:50%"></div>
<svg class="a" style="left:1282px;top:587px" width="21" height="21"><path d="M5 5 L16 16" stroke="#aaa" stroke-width="2.5"/></svg>
<div class="a" style="left:1321px;top:571px;width:73px;height:18px;border:1px solid #6a6a6a;border-radius:2px;background:#535353"></div>
<div class="t" style="left:1334px;top:575px;font-size:9.5px;font-weight:bold;color:#eee">Make Mask</div>
<div class="a" style="left:1322px;top:594px;width:10px;height:10px;border:1px solid #6a6a6a;border-radius:2px"></div>
<div class="t" style="left:1336px;top:594px;font-size:9.5px;color:#7a7a7a">Clip</div>
<div class="a" style="left:1322px;top:611px;width:10px;height:10px;border:1px solid #6a6a6a;border-radius:2px"></div>
<div class="t" style="left:1336px;top:611px;font-size:9.5px;color:#7a7a7a">Invert Mask</div>

<div class="a" style="left:1195px;top:630px;width:373px;height:22px;background:#424242;border-top:1px solid #3a3a3a;border-bottom:1px solid #383838"></div>
<div class="a" style="left:1195px;top:630px;width:44px;height:23px;background:#535353"></div>
<div class="tab tabon" style="left:1202px;top:636px">Layers</div>
<div class="tab" style="left:1247px;top:636px">Asset Export</div>
<div class="tab" style="left:1319px;top:636px">Appearance</div>
<div class="tab" style="left:1389px;top:636px">Artboards</div>
<div class="tab" style="left:1450px;top:636px">Graphic Styles</div>
<div class="ic" style="left:1553px;top:638px;width:9px;height:1px"></div><div class="ic" style="left:1553px;top:641px;width:9px;height:1px"></div><div class="ic" style="left:1553px;top:644px;width:9px;height:1px"></div>
<div class="a" style="left:1199px;top:659px;width:363px;height:276px;border:1px solid #4a4a4a"></div>
<div class="a" style="left:1218px;top:660px;width:1px;height:257px;background:#464646"></div>
<div class="a" style="left:1236px;top:660px;width:1px;height:257px;background:#464646"></div>
<div class="a" style="left:1532px;top:660px;width:1px;height:257px;background:#464646"></div>
<div class="row" style="top:825px;background:#4f6078"></div>
<svg class="a" style="left:1199px;top:660px" width="363" height="260">
<defs><g id="eye"><path d="M-6 0 Q0 -5 6 0 Q0 5 -6 0Z" fill="#ccc"/><circle r="2" fill="#535353"/><circle r="1" fill="#ccc"/></g></defs>
<g stroke="#464646"><path d="M0 18.5H363M0 37H363M0 55.5H363M0 74H363M0 92.5H363M0 111H363M0 129.5H363M0 148H363M0 166.5H363M0 185H363M0 203.5H363M0 222H363M0 240.5H363M0 259H363"/></g>
<use href="#eye" x="9" y="9"/><use href="#eye" x="9" y="27.5"/><use href="#eye" x="9" y="46"/><use href="#eye" x="9" y="64.5"/><use href="#eye" x="9" y="83"/><use href="#eye" x="9" y="101.5"/><use href="#eye" x="9" y="175.5"/>
<rect x="39" y="2" width="3" height="15" fill="#e8672a"/><rect x="39" y="20.5" width="3" height="15" fill="#5ef0f0"/><rect x="39" y="39" width="3" height="15" fill="#5ef0f0"/><rect x="39" y="57.5" width="3" height="15" fill="#5ef0f0"/><rect x="39" y="76" width="3" height="15" fill="#5ef0f0"/><rect x="39" y="94.5" width="3" height="15" fill="#5ef0f0"/><rect x="39" y="113" width="3" height="15" fill="#5ef0f0"/><rect x="39" y="131.5" width="3" height="15" fill="#f5f050"/><rect x="39" y="150" width="3" height="15" fill="#8a1b35"/><rect x="39" y="168.5" width="3" height="15" fill="#5050f0"/><rect x="39" y="187" width="3" height="15" fill="#f8f048"/><rect x="39" y="205.5" width="3" height="15" fill="#e060e8"/><rect x="39" y="224" width="3" height="15" fill="#e85a4a"/><rect x="39" y="242.5" width="3" height="15" fill="#8a6020"/>
<g stroke="#ccc" fill="none" stroke-width="1"><path d="M48 5 L51 9 L48 13"/><path d="M46 26 L50 30 L54 26"/>
<path d="M69 134 L72 138 L69 142"/><path d="M69 152.5 L72 156.5 L69 160.5"/><path d="M69 171 L72 175 L69 179"/><path d="M69 189.5 L72 193.5 L69 197.5"/><path d="M69 208 L72 212 L69 216"/><path d="M69 226.5 L72 230.5 L69 234.5"/><path d="M69 245 L72 249 L69 253"/></g>
<g fill="#fff" stroke="#000"><rect x="65" y="2" width="14" height="14"/><rect x="65" y="20.5" width="14" height="14"/>
<rect x="84" y="39" width="14" height="14"/><rect x="84" y="57.5" width="14" height="14"/><rect x="84" y="76" width="14" height="14"/><rect x="84" y="94.5" width="14" height="14"/><rect x="84" y="113" width="14" height="14"/><rect x="84" y="131.5" width="14" height="14"/><rect x="84" y="150" width="14" height="14"/><rect x="84" y="168.5" width="14" height="14"/><rect x="84" y="187" width="14" height="14"/><rect x="84" y="205.5" width="14" height="14"/><rect x="84" y="224" width="14" height="14"/><rect x="84" y="242.5" width="14" height="14"/></g>
<path d="M68 26 L73 23 L77 26 L77 31 L73 33 L68 31Z" fill="#000"/>
<path d="M86 134 L93 133 L96 140 L92 144 L86 142Z" fill="#333"/>
<g fill="#a040c0"><circle cx="88" cy="160" r="0.8"/><circle cx="91" cy="158" r="0.8"/><circle cx="94" cy="156" r="0.8"/><circle cx="96" cy="154" r="0.8"/></g>
<path d="M85 171 L92 169 L97 174 L96 181 L88 181 L85 176Z" fill="#000"/>
<path d="M85 193 L90 190 L97 189 L97 193 L88 196Z" fill="#d03040"/>
<path d="M86 210 L96 207 L95 215 L88 218Z" fill="#f0c840"/>
<path d="M87 227 L93 226 L97 230 L94 236 L86 236Z" fill="#ccd84a"/>
<path d="M87 245 L93 244 L96 250 L92 255 L88 252Z" fill="none" stroke="#000" stroke-width="1.2"/>
<g fill="none" stroke="#ccc"><circle cx="341" cy="9" r="3.5"/><circle cx="341" cy="27.5" r="3.5"/><circle cx="341" cy="46" r="3.5"/><circle cx="341" cy="64.5" r="3.5"/><circle cx="341" cy="83" r="3.5"/><circle cx="341" cy="101.5" r="3.5"/><circle cx="341" cy="120" r="3.5"/><circle cx="341" cy="138.5" r="3.5"/><circle cx="341" cy="157" r="3.5"/><circle cx="341" cy="175.5" r="3.5"/><circle cx="341" cy="175.5" r="5"/><circle cx="341" cy="194" r="3.5"/><circle cx="341" cy="212.5" r="3.5"/><circle cx="341" cy="231" r="3.5"/><circle cx="341" cy="249.5" r="3.5"/></g>
<rect x="350" y="24.5" width="5" height="5" fill="#5ef0f0" stroke="#000" stroke-width="0.6"/>
<rect x="349" y="171.5" width="8" height="8" fill="#5050f0" stroke="#000" stroke-width="0.8"/>
<g font-family="Liberation Sans" font-size="9.5" fill="#e0e0e0">
<text x="84" y="12.5">REG MARKS</text><text x="84" y="31">Simplified</text>
<text x="104" y="49.5">&lt;Guide&gt;</text><text x="104" y="68">&lt;Guide&gt;</text><text x="104" y="86.5">&lt;Guide&gt;</text><text x="104" y="105">&lt;Guide&gt;</text><text x="104" y="123.5">&lt;Guide&gt;</text>
<text x="104" y="142">Black Detail</text><text x="104" y="160.5">Black Crown</text><text x="104" y="179">Dark Green</text><text x="104" y="197.5">Red</text><text x="104" y="216">Yellow</text><text x="104" y="234.5">Light Green</text><text x="104" y="253">Bold Black</text></g>
</svg>
<div class="t" style="left:1199px;top:942px;font-size:9.5px;color:#ccc">2 La...</div>
<svg class="a" style="left:1416px;top:938px" width="150" height="16"><g stroke="#c8c8c8" fill="none" stroke-width="1.1">
<path d="M3 5v9h9M7 10l7-7M10 3h4v4"/><circle cx="29" cy="7" r="4"/><path d="M32 10l4 4"/><rect x="48" y="4" width="7" height="7" fill="#aaa"/><rect x="51" y="7" width="7" height="7"/>
<path d="M70 4v4h4M72 6l2 2"/><rect x="76" y="4" width="9" height="9"/><path d="M80.5 6v5M78 8.5h5"/><rect x="96" y="3" width="10" height="10"/><path d="M101 5v6M98 8h6"/><path d="M117 4h10M119 4v9h6v-9M121 6v5M123 6v5"/></g></svg>

<div class="a" style="left:62px;top:940px;width:1130px;height:16px;background:#474747;border-top:1px solid #3a3a3a"></div>
<div class="a" style="left:66px;top:941px;width:60px;height:15px;background:#404040"></div>
<div class="t" style="left:70px;top:944px;font-size:9px;color:#ddd">83.35%</div>
<div class="t" style="left:115px;top:942px;font-size:9px;color:#ccc">⌄</div>
<div class="t" style="left:135px;top:944px;font-size:9px;color:#ddd">0°</div>
<div class="t" style="left:179px;top:942px;font-size:9px;color:#ccc">⌄</div>
<div class="t" style="left:199px;top:944px;font-size:8px;color:#777">|‹ ‹</div>
<div class="a" style="left:228px;top:941px;width:30px;height:15px;background:#404040"></div>
<div class="t" style="left:232px;top:944px;font-size:9px;color:#ddd">1</div>
<div class="t" style="left:267px;top:942px;font-size:9px;color:#ccc">⌄</div>
<div class="t" style="left:286px;top:944px;font-size:8px;color:#777">› ›|</div>
<div class="t" style="left:384px;top:944px;font-size:9px;color:#ccc">Selection</div>
<div class="t" style="left:496px;top:943px;font-size:8px;color:#ccc">▶</div>
<div class="t" style="left:512px;top:942px;font-size:9px;color:#999">‹</div>
<div class="a" style="left:845px;top:942px;width:20px;height:13px;border-radius:6px;background:#5e5e5e"></div>
<div class="t" style="left:1168px;top:942px;font-size:9px;color:#999">›</div>
</div></body></html>
